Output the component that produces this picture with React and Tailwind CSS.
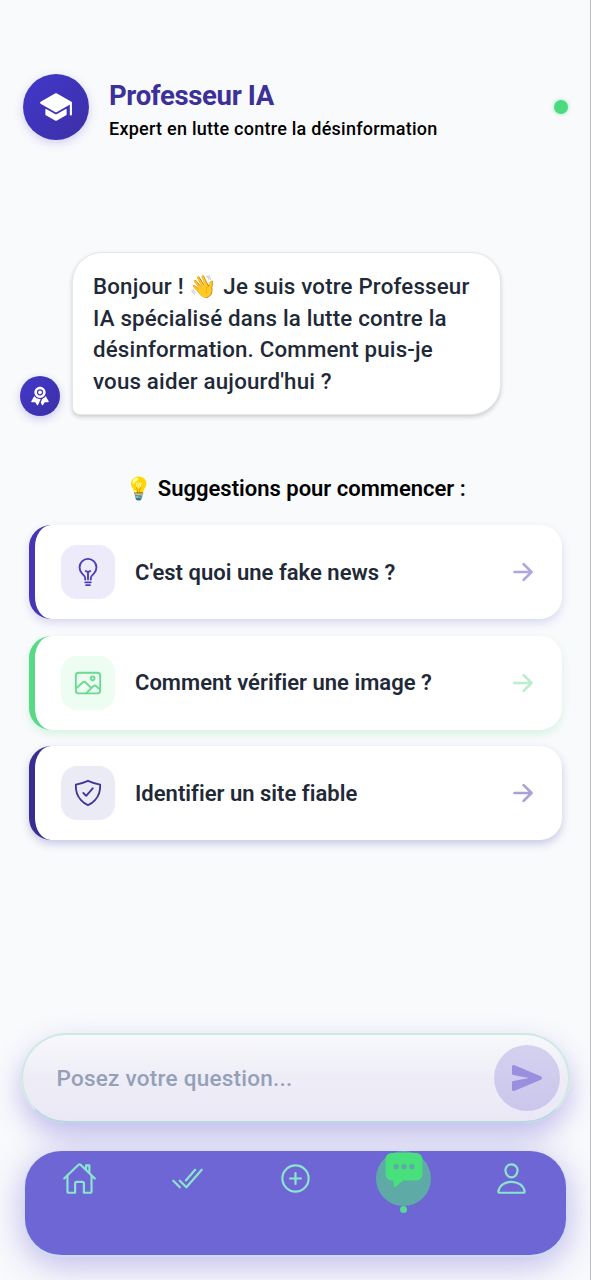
import React from 'react';
import {
  IoAddCircleOutline,
  IoArrowForward,
  IoBulbOutline,
  IoChatboxEllipses,
  IoCheckmarkDoneOutline,
  IoHomeOutline,
  IoImageOutline,
  IoPersonOutline,
  IoRibbon,
  IoSchool,
  IoSend,
  IoShieldCheckmarkOutline,
} from 'react-icons/io5';

const suggestions = [
  {
    label: "C'est quoi une fake news ?",
    icon: IoBulbOutline,
    card: 'border-[#4635b5] shadow-[0_4px_9px_rgba(67,56,202,0.17)]',
    box: 'bg-[#edebf9]',
    color: 'text-[#4c3eb8]',
  },
  {
    label: 'Comment vérifier une image ?',
    icon: IoImageOutline,
    card: 'border-[#58d985] shadow-[0_4px_9px_rgba(74,222,128,0.2)]',
    box: 'bg-[#edfdf2]',
    color: 'text-[#68da91]',
  },
  {
    label: 'Identifier un site fiable',
    icon: IoShieldCheckmarkOutline,
    card: 'border-[#382d91] shadow-[0_4px_9px_rgba(55,48,163,0.24)]',
    box: 'bg-[#ebebf5]',
    color: 'text-[#41379a]',
  },
];

const Header = () => (
  <header className="flex h-[66px] items-center pl-[23px] pr-[22px]">
    <div className="flex size-[66px] shrink-0 items-center justify-center rounded-full bg-linear-to-br from-[#4338ca] to-[#3b2fa6] shadow-[0_3px_10px_rgba(67,56,202,0.22)]">
      <IoSchool className="size-[34px] text-white" />
    </div>
    <div className="ml-[20px] flex-1 pt-[9px] whitespace-nowrap">
      <h1 className="text-[27.5px] leading-[34px] font-bold tracking-[-0.35px] text-[#3c3099]">Professeur IA</h1>
      <p className="text-[18px] leading-[32px] font-medium tracking-[0.25px] text-black">Expert en lutte contre la désinformation</p>
    </div>
    <span className="size-[14px] rounded-full bg-[#4bda7d] shadow-[0_0_4px_rgba(74,222,128,0.5)]" />
  </header>
);

const Message = () => (
  <div className="mt-[112px] flex items-end pl-[20px]">
    <div className="mb-[-1px] flex size-[40px] items-center justify-center rounded-full bg-linear-to-br from-[#4338ca] to-[#3b2fa6] shadow-[0_3px_8px_rgba(67,56,202,0.25)]">
      <IoRibbon className="size-[20px] text-white" />
    </div>
    <div className="ml-[12px] h-[163px] w-[429px] rounded-[30px] rounded-bl-[8px] border border-[#e6e6eb] bg-white pt-[18px] pl-[20px] text-[22.3px] leading-[31.7px] font-medium whitespace-nowrap tracking-[0.18px] text-[#1f2937] shadow-[0_2px_4px_rgba(0,0,0,0.18)]">
      <p>Bonjour ! 👋 Je suis votre Professeur</p>
      <p>IA spécialisé dans la lutte contre la</p>
      <p>désinformation. Comment puis-je</p>
      <p>vous aider aujourd'hui ?</p>
    </div>
  </div>
);

const Suggestions = () => (
  <section className="mt-[58px] pr-[28px] pl-[29px]">
    <h2 className="text-center text-[22px] leading-[32px] font-semibold text-black">💡 Suggestions pour commencer :</h2>
    <div className="mt-[20px] flex flex-col gap-[16.5px]">
      {suggestions.map(({ label, icon: Icon, card, box, color }) => (
        <button
          key={label}
          className={`flex h-[94px] w-full items-center rounded-[22px] border-l-[6px] bg-white pr-[25px] pl-[26px] ${card}`}
        >
          <span className={`flex size-[54px] items-center justify-center rounded-[16px] ${box}`}>
            <Icon className={`size-[30px] ${color}`} />
          </span>
          <span className="ml-[20px] flex-1 text-left text-[22px] font-semibold tracking-[0.02px] whitespace-nowrap text-[#1f2937]">
            {label}
          </span>
          <IoArrowForward className={`size-[28px] opacity-45 ${color}`} />
        </button>
      ))}
    </div>
  </section>
);

const Composer = () => (
  <div className="mr-[20px] ml-[21px] mt-[193px] flex h-[90px] items-center rounded-full border-2 border-[#cfe9e2] border-b-[#bbd6e3] bg-linear-to-b from-[#f7f8fb] via-[#eeedf7] to-[#ebe8f6] pr-[8px] pl-[33.5px] shadow-[0_12px_28px_rgba(85,70,205,0.34)]">
    <span className="flex-1 pt-[2px] text-[22.5px] font-medium tracking-[0.25px] text-[#94a0b8]">Posez votre question...</span>
    <button className="flex size-[66px] items-center justify-center rounded-full bg-linear-to-b from-[#d4d0ef] to-[#cbc7ec]">
      <IoSend className="size-[32px] text-[#9a8fde]" />
    </button>
  </div>
);

const TabBar = () => (
  <nav className="mr-[24px] ml-[25px] mt-[28px] grid h-[104px] grid-cols-5 rounded-[36px] bg-[#6f66d5] text-[#8be5cd] shadow-[0_1px_1px_1px_#c7e0f5,0_8px_34px_2px_rgba(85,70,205,0.36)]">
    <div className="flex h-[55px] items-center justify-center">
      <IoHomeOutline className="size-[35px]" />
    </div>
    <div className="flex h-[55px] items-center justify-center">
      <IoCheckmarkDoneOutline className="size-[35px]" />
    </div>
    <div className="flex h-[55px] items-center justify-center">
      <IoAddCircleOutline className="size-[35px]" />
    </div>
    <div className="flex flex-col items-center">
      <div className="flex h-[55px] w-[55px] justify-center rounded-full bg-[#5eaaa6]">
        <IoChatboxEllipses className="mt-[-2px] size-[42px] shrink-0 text-[#48df7d]" />
      </div>
      <span className="size-[7px] rounded-full bg-[#55d994]" />
    </div>
    <div className="flex h-[55px] items-center justify-center">
      <IoPersonOutline className="size-[35px]" />
    </div>
  </nav>
);

const App = () => {
  return (
    <div className="h-[1280px] w-[591px] overflow-hidden border-r border-[#b9bbc0] bg-[#f9fafc] pt-[74px] font-['Roboto',sans-serif]">
      <Header />
      <Message />
      <Suggestions />
      <Composer />
      <TabBar />
    </div>
  );
};

export default App;
